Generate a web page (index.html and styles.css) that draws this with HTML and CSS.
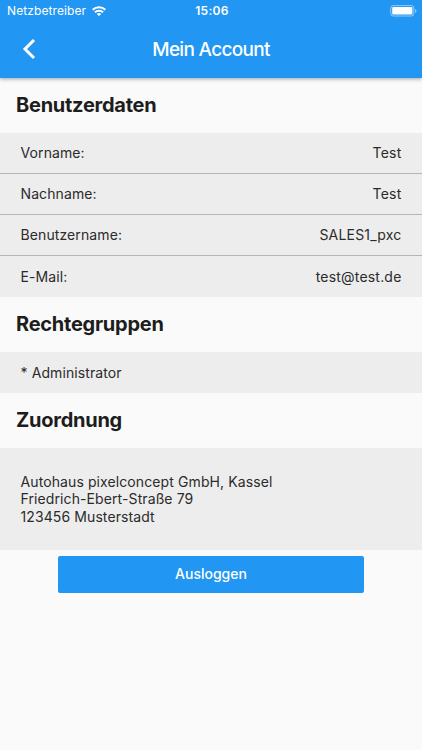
FILE: index.html
```html
<!DOCTYPE html>
<html lang="de">
<head>
    <meta charset="UTF-8">
    <meta name="viewport" content="width=device-width, initial-scale=1.0">
    <title>Mein Account</title>
    <link rel="stylesheet" href="styles.css">
</head>
<body>
    <header class="header">
        <div class="status-bar">
            <div class="carrier">
                <span class="carrier-name">Netzbetreiber</span>
                <svg class="wifi" width="14" height="10" viewBox="0 0 14 10" fill="none" stroke="#fff" stroke-width="2">
                    <path d="M0.7 3.8a9 9 0 0 1 12.6 0"/>
                    <path d="M2.9 6.3a5.9 5.9 0 0 1 8.2 0"/>
                    <path d="M7 10L4.7 7.9a3.1 3.1 0 0 1 4.6 0z" fill="#fff" stroke="none"/>
                </svg>
            </div>
            <span class="clock">15:06</span>
            <svg class="battery" width="27" height="12" viewBox="0 0 27 12">
                <rect x="0.8" y="0.6" width="23" height="10.4" rx="2.4" fill="none" stroke="#fff" stroke-opacity="0.5"/>
                <rect x="2.2" y="2" width="20.2" height="7.6" rx="1.1" fill="#fff"/>
                <path d="M25 4v3.8q1.5-.6 1.5-1.9T25 4z" fill="#fff" fill-opacity="0.5"/>
            </svg>
        </div>
        <div class="nav-bar">
            <svg class="back" width="14" height="22" viewBox="0 0 14 22" fill="none" stroke="#fff" stroke-width="3">
                <path d="M12 2L3 11l9 9"/>
            </svg>
            <h1 class="title">Mein Account</h1>
        </div>
    </header>

    <main>
        <h2 class="section-title">Benutzerdaten</h2>
        <div class="list">
            <div class="row">
                <span class="label">Vorname:</span>
                <span class="value">Test</span>
            </div>
            <div class="row">
                <span class="label">Nachname:</span>
                <span class="value">Test</span>
            </div>
            <div class="row">
                <span class="label">Benutzername:</span>
                <span class="value">SALES1_pxc</span>
            </div>
            <div class="row">
                <span class="label">E-Mail:</span>
                <span class="value">test@test.de</span>
            </div>
        </div>

        <h2 class="section-title">Rechtegruppen</h2>
        <div class="list">
            <div class="row">
                <span class="label">* Administrator</span>
            </div>
        </div>

        <h2 class="section-title">Zuordnung</h2>
        <div class="address">
            Autohaus pixelconcept GmbH, Kassel<br>
            Friedrich-Ebert-Straße 79<br>
            123456 Musterstadt
        </div>

        <button class="logout">Ausloggen</button>
    </main>
</body>
</html>
```
FILE: styles.css
```css
* {
    box-sizing: border-box;
}

body {
    margin: 0;
    min-height: 100vh;
    background: #fafafa;
    color: #2b2b2b;
    font-family: Inter, "Liberation Sans", sans-serif;
    font-size: 14px;
    letter-spacing: 0.1px;
}

.header {
    height: 77.5px;
    background: #2196f3;
    color: #fff;
    box-shadow: 0 1px 4px rgba(0, 0, 0, 0.35);
}

.status-bar {
    display: grid;
    grid-template-columns: 1fr auto 1fr;
    align-items: center;
    height: 21px;
    padding: 0 5px 0 7px;
    font-size: 12px;
}

.carrier {
    display: flex;
    align-items: center;
    gap: 6px;
}

.clock {
    font-weight: 600;
    letter-spacing: 0.3px;
}

.battery {
    justify-self: end;
}

.nav-bar {
    display: grid;
    grid-template-columns: 1fr auto 1fr;
    align-items: center;
    height: 56px;
    padding: 0 22px;
}

.title {
    margin: 0;
    font-size: 19px;
    font-weight: 500;
    letter-spacing: -0.7px;
}

.section-title {
    height: 55px;
    margin: 0;
    padding-left: 16px;
    color: #1d1d1d;
    font-size: 20px;
    font-weight: 700;
    line-height: 55.4px;
    letter-spacing: -0.25px;
}

.list,
.address {
    background: #ededed;
}

.row {
    display: flex;
    justify-content: space-between;
    align-items: center;
    height: 41.2px;
    padding: 0 20.5px;
    border-bottom: 1px solid #b5b5b5;
}

.row:last-child {
    padding-bottom: 1px;
    border-bottom: none;
}

.value {
    letter-spacing: 0.2px;
}

.address {
    height: 102px;
    padding: 24.5px 20.5px;
    line-height: 17.4px;
}

.logout {
    display: block;
    width: 306px;
    height: 37px;
    margin: 6px auto 0;
    padding: 0 0 2px;
    border: none;
    border-radius: 2px;
    background: #2196f3;
    color: #fff;
    font-family: inherit;
    font-size: 14px;
    font-weight: 500;
    letter-spacing: 0;
    cursor: pointer;
}
```
